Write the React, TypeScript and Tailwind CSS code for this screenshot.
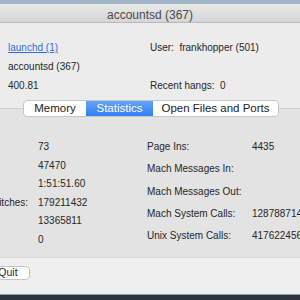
import React from 'react';

const font = { fontFamily: '"Liberation Sans", Arial, sans-serif' };

const leftStats = [
  { label: 'Threads:', value: '73' },
  { label: 'Ports:', value: '47470' },
  { label: 'CPU Time:', value: '1:51:51.60' },
  { label: 'Context Switches:', value: '179211432' },
  { label: 'Faults:', value: '13365811' },
  { label: 'Zombies:', value: '0' },
];

const rightStats = [
  { label: 'Page Ins:', value: '4435' },
  { label: 'Mach Messages In:', value: '' },
  { label: 'Mach Messages Out:', value: '' },
  { label: 'Mach System Calls:', value: '1287887142' },
  { label: 'Unix System Calls:', value: '4176224563' },
];

export default function App() {
  return (
    <div className="w-[300px] h-[300px] overflow-hidden bg-[#ececec] text-[10px] text-[#262626]" style={font}>
      {/* Desktop strip */}
      <div className="h-[4px] bg-[#a4b7ca]"></div>

      {/* Title bar */}
      <div className="h-[19px] pt-[3px] flex items-center justify-center bg-gradient-to-b from-[#e9e9e9] to-[#d6d6d6] border-b border-[#b9b9b9]">
        <span className="text-[12px] text-[#4a4a4a]">accountsd (367)</span>
      </div>

      {/* Process info */}
      <div className="h-[85px] pt-[18px] pl-[8px] grid grid-cols-[142px_1fr] content-start gap-y-[6px] leading-[13px]">
        <a className="text-[#2f6de0] underline w-fit">launchd (1)</a>
        <span>User:&nbsp; frankhopper (501)</span>
        <span>accountsd (367)</span>
        <span></span>
        <span>400.81</span>
        <span>Recent hangs:&nbsp; 0</span>
      </div>

      {/* Tab view */}
      <div className="relative h-[149px] bg-[#e3e3e3] border-t border-[#cfcfcf]">
        <div className="absolute left-[23px] top-[-9px] w-[256px] h-[17px] flex rounded-[4px] border border-[#c6c6c6] bg-white overflow-hidden text-[11.5px] text-[#222]">
          <div className="w-[62px] flex items-center justify-center">Memory</div>
          <div className="w-[67px] flex items-center justify-center text-white bg-gradient-to-b from-[#63a4f9] to-[#2f80f6]">Statistics</div>
          <div className="flex-1 flex items-center justify-center">Open Files and Ports</div>
        </div>

        <div className="flex pt-[31px] leading-[13px]">
          <div className="ml-[-52px] w-[199px] shrink-0 grid grid-cols-[90px_1fr] gap-y-[5.6px]">
            {leftStats.map((s) => (
              <React.Fragment key={s.label}>
                <span className="whitespace-nowrap">{s.label}</span>
                <span>{s.value}</span>
              </React.Fragment>
            ))}
          </div>
          <div className="shrink-0 grid grid-cols-[105px_1fr] gap-y-[5.6px] whitespace-nowrap">
            {rightStats.map((s) => (
              <React.Fragment key={s.label}>
                <span>{s.label}</span>
                <span>{s.value}</span>
              </React.Fragment>
            ))}
          </div>
        </div>
      </div>

      {/* Bottom bar */}
      <div className="h-[37px] bg-[#efefef] pt-[8px] border-t border-[#dadada]">
        <div className="ml-[-14px] w-[44px] h-[14px] flex items-center justify-center bg-white border border-[#c4c4c4] rounded-[4px] text-[10.5px]">
          Quit
        </div>
      </div>
      <div className="h-[1px] bg-[#9a9a9a]"></div>
      <div className="h-[6px] bg-[#2b3541]"></div>
    </div>
  );
}
